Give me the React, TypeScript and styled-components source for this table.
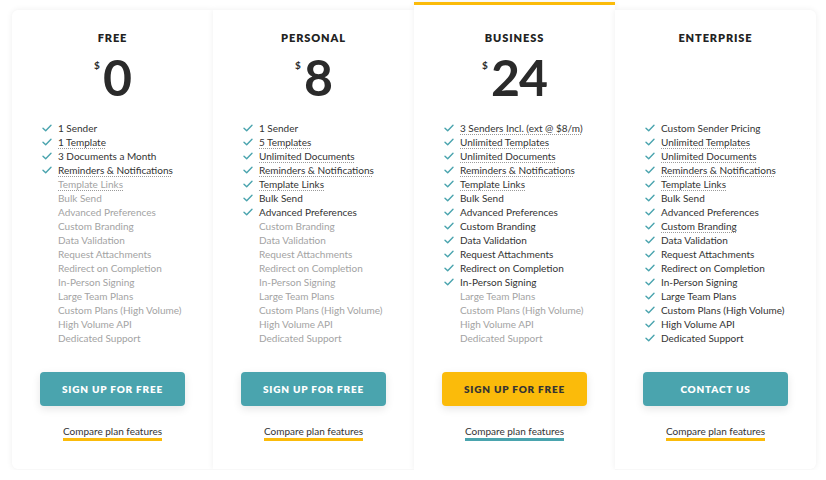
import { createGlobalStyle } from "styled-components";
import styled from "styled-components";

const GlobalStyle = createGlobalStyle`
  body {
    margin: 0;
    background: #fff;
    font-family: Lato, "Open Sans", Arial, sans-serif;
    color: #333;
  }
`;

const TEAL = "#4aa4ae";
const YELLOW = "#fbbb0a";

interface Feature {
  label: string;
  on: boolean;
  tip?: boolean;
}

interface Plan {
  name: string;
  price?: string;
  cta: string;
  featured?: boolean;
  features: Feature[];
}

const ALL = [
  "Sender",
  "Template",
  "Documents",
  "Reminders & Notifications",
  "Template Links",
  "Bulk Send",
  "Advanced Preferences",
  "Custom Branding",
  "Data Validation",
  "Request Attachments",
  "Redirect on Completion",
  "In-Person Signing",
  "Large Team Plans",
  "Custom Plans (High Volume)",
  "High Volume API",
  "Dedicated Support",
];

const build = (first: string[], count: number, tips: string[]): Feature[] =>
  ALL.map((f, i) => {
    const label = i < first.length ? first[i] : f;
    return { label, on: i < count, tip: tips.includes(label) };
  });

const plans: Plan[] = [
  {
    name: "FREE",
    price: "0",
    cta: "SIGN UP FOR FREE",
    features: build(
      ["1 Sender", "1 Template", "3 Documents a Month"],
      4,
      ["1 Template", "Reminders & Notifications", "Template Links"]
    ),
  },
  {
    name: "PERSONAL",
    price: "8",
    cta: "SIGN UP FOR FREE",
    features: build(
      ["1 Sender", "5 Templates", "Unlimited Documents"],
      7,
      ["5 Templates", "Unlimited Documents", "Reminders & Notifications", "Template Links"]
    ),
  },
  {
    name: "BUSINESS",
    price: "24",
    cta: "SIGN UP FOR FREE",
    featured: true,
    features: build(
      ["3 Senders Incl. (ext @ $8/m)", "Unlimited Templates", "Unlimited Documents"],
      12,
      [
        "3 Senders Incl. (ext @ $8/m)",
        "Unlimited Templates",
        "Unlimited Documents",
        "Reminders & Notifications",
        "Template Links",
      ]
    ),
  },
  {
    name: "ENTERPRISE",
    cta: "CONTACT US",
    features: build(
      ["Custom Sender Pricing", "Unlimited Templates", "Unlimited Documents"],
      16,
      [
        "Unlimited Templates",
        "Unlimited Documents",
        "Reminders & Notifications",
        "Template Links",
        "Custom Branding",
      ]
    ),
  },
];

const Page = styled.div`
  display: grid;
  grid-template-columns: repeat(4, 201px);
  align-items: start;
  padding: 10px 0 0 12px;
`;

const Card = styled.div<{ $featured?: boolean }>`
  display: flex;
  flex-direction: column;
  align-items: center;
  background: #fff;
  box-sizing: border-box;
  height: ${(p) => (p.$featured ? 468 : 459)}px;
  margin-top: ${(p) => (p.$featured ? -8 : 0)}px;
  padding-top: ${(p) => (p.$featured ? 26 : 21)}px;
  border-top: ${(p) => (p.$featured ? `3px solid ${YELLOW}` : "none")};
  box-shadow: 0 0 6px rgba(0, 0, 0, 0.07);
  &:first-child {
    border-radius: 6px 0 0 6px;
  }
  &:last-child {
    border-radius: 0 6px 6px 0;
  }
`;

const Title = styled.h2`
  margin: 0;
  height: 14px;
  line-height: 14px;
  font-size: 11px;
  font-weight: 800;
  letter-spacing: 0.9px;
  color: #222;
`;

const PriceRow = styled.div`
  display: flex;
  align-items: flex-start;
  justify-content: center;
  height: 65px;
  margin-top: 11px;
  color: #2a2a2a;
`;

const Currency = styled.span`
  font-size: 10px;
  font-weight: 700;
  margin-top: 3px;
  margin-right: 3px;
`;

const Amount = styled.span`
  font-size: 50px;
  font-weight: 700;
  line-height: 42px;
  letter-spacing: -1px;
`;

const List = styled.ul`
  list-style: none;
  margin: 0;
  padding: 0 0 0 30px;
  align-self: stretch;
  height: 251px;
`;

const Item = styled.li<{ $on: boolean }>`
  display: flex;
  align-items: center;
  height: 14px;
  font-size: 10px;
  color: ${(p) => (p.$on ? "#333" : "#a3a3a3")};
  white-space: nowrap;
`;

const CheckSlot = styled.span`
  width: 16px;
  flex: none;
  display: flex;
  align-items: center;
`;

const Tip = styled.span`
  text-decoration: underline dotted #9a9a9a;
  text-underline-offset: 2px;
`;

const Button = styled.button<{ $featured?: boolean }>`
  width: 145px;
  height: 34px;
  border: none;
  border-radius: 4px;
  background: ${(p) => (p.$featured ? YELLOW : TEAL)};
  color: ${(p) => (p.$featured ? "#333" : "#fff")};
  font-family: inherit;
  font-size: 10px;
  font-weight: 800;
  letter-spacing: 0.8px;
  box-shadow: 0 3px 8px rgba(0, 0, 0, 0.1);
  cursor: pointer;
`;

const Compare = styled.a<{ $featured?: boolean }>`
  margin-top: 19px;
  font-size: 10px;
  color: #333;
  text-decoration: none;
  padding-bottom: 1px;
  border-bottom: 3px solid ${(p) => (p.$featured ? TEAL : YELLOW)};
  line-height: 12px;
`;

const Check = () => (
  <svg width="10" height="8" viewBox="0 0 10 8">
    <path d="M1 4.2 L3.7 6.8 L9 1.2" fill="none" stroke={TEAL} strokeWidth="1.4" strokeLinecap="round" strokeLinejoin="round" />
  </svg>
);

const PlanCard = ({ plan }: { plan: Plan }) => (
  <Card $featured={plan.featured}>
    <Title>{plan.name}</Title>
    <PriceRow>
      {plan.price && (
        <>
          <Currency>$</Currency>
          <Amount>{plan.price}</Amount>
        </>
      )}
    </PriceRow>
    <List>
      {plan.features.map((f) => (
        <Item key={f.label} $on={f.on}>
          <CheckSlot>{f.on && <Check />}</CheckSlot>
          {f.tip ? <Tip>{f.label}</Tip> : f.label}
        </Item>
      ))}
    </List>
    <Button $featured={plan.featured}>{plan.cta}</Button>
    <Compare href="#" $featured={plan.featured}>
      Compare plan features
    </Compare>
  </Card>
);

export default function App() {
  return (
    <>
      <GlobalStyle />
      <Page>
        {plans.map((p) => (
          <PlanCard key={p.name} plan={p} />
        ))}
      </Page>
    </>
  );
}
